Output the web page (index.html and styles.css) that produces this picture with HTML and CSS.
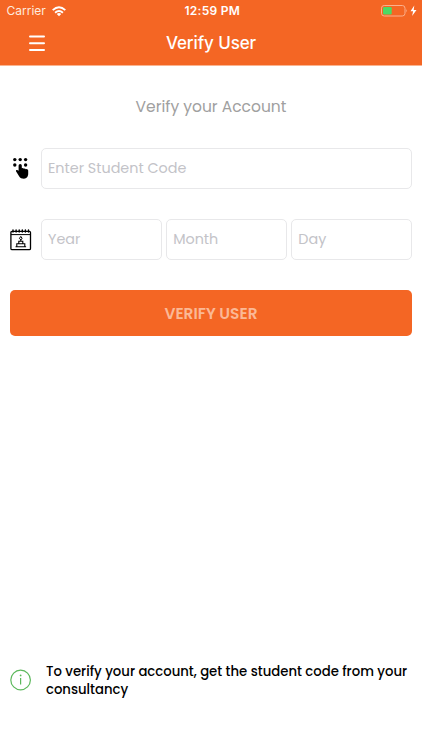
FILE: index.html
```
<!DOCTYPE html>
<html lang="en">
<head>
<meta charset="utf-8">
<title>Verify User</title>
<link rel="stylesheet" href="styles.css">
</head>
<body>
<header class="header">
  <div class="status">
    <div class="carrier"><span>Carrier</span>
      <svg width="14" height="11" viewBox="0 0 14 11" fill="none" stroke="#fff" stroke-width="1.9"><path d="M.7 4.1Q7-1.7 13.3 4.1M3.1 6.7Q7 3.2 10.9 6.7"/><path d="M4.8 8Q7 6.2 9.2 8L7 10.3Z" fill="#fff" stroke="none"/></svg>
    </div>
    <span class="time">12:59 PM</span>
    <svg class="battery" width="37" height="12" viewBox="0 0 37 12"><rect x=".5" y=".5" width="23.5" height="10.5" rx="2.7" fill="none" stroke="#fbb08d"/><rect x="2" y="2" width="8.7" height="7.5" rx="1.2" fill="#4cd964"/><path d="M25.3 4q1.6 1.7 0 3.5z" fill="#fbb08d"/><path d="M33.3.6 29.5 6.3h2.6l-1 4.6 4.4-6h-2.8z" fill="#fff"/></svg>
  </div>
  <div class="navbar">
    <svg class="menu" width="16" height="17" viewBox="0 0 16 17" stroke="#fff" stroke-width="2" stroke-linecap="round"><path d="M1 1.4h14M1 8.2h14M1 14.9h14"/></svg>
    <h1>Verify User</h1>
  </div>
</header>
<main class="form">
  <h2>Verify your Account</h2>
  <div class="row">
    <svg width="22" height="22" viewBox="0 0 22 22"><g><circle cx="4.8" cy="2.6" r="1.7"/><circle cx="10.2" cy="2.6" r="1.7"/><circle cx="15.6" cy="2.6" r="1.7"/><circle cx="4.8" cy="8" r="1.7"/><circle cx="15.6" cy="8" r="1.7"/></g><path d="M8.6 8.5a1.6 1.6 0 0 1 3.2 0v2.8q1.4-.6 2 .4 1.4-.5 1.9.5 2.3-.5 2.5 1.4v3.2c0 2.6-1.5 4.9-4.2 4.9-2.2 0-3.8-.6-4.9-2.4L6 14.3c-.3-1.6 1.3-1.9 2.6-.6z"/></svg>
    <input class="code" placeholder="Enter Student Code" aria-label="Student code">
  </div>
  <div class="row">
    <svg width="22" height="22" viewBox="0 0 22 22" fill="none" stroke="#000"><rect x=".9" y="2.4" width="19.6" height="18.2" rx="1.2" stroke-width="1.3"/><path d="M1 5.6h19.3" stroke-width="1"/><path d="M3 .9v2.2M6.1.9v2.2M9.2.9v2.2M12.3.9v2.2M15.4.9v2.2M18.5.9v2.2" stroke-width="1.4" stroke-linecap="round"/><path d="M6.8 17.4v-2.7h8v2.7M8.8 14.5v-2.3h4v2.3M10.8 12v-2M5.5 17.8h10.6" stroke-width="1.1"/><path d="M10.8 7.4q2.8 2.6 0 3.3-2.8-.7 0-3.3z" stroke-width="1"/></svg>
    <div class="dates">
      <input class="year" placeholder="Year" aria-label="Year">
      <input class="month" placeholder="Month" aria-label="Month">
      <input class="day" placeholder="Day" aria-label="Day">
    </div>
  </div>
  <button class="submit">VERIFY USER</button>
</main>
<footer class="note">
  <svg width="22" height="22" viewBox="0 0 22 22" fill="none" stroke="#5cb85c"><circle cx="10.6" cy="11" r="9.8" stroke-width="1.2"/><path d="M10.6 9v6.4" stroke-width="1.2"/><circle cx="10.6" cy="6.4" r=".9" fill="#5cb85c" stroke="none"/></svg>
  <p>To verify your account, get the student code from your<br>consultancy</p>
</footer>
</body>
</html>
```
FILE: styles.css
```
* { box-sizing: border-box; }
body {
  margin: 0;
  height: 750px;
  display: flex;
  flex-direction: column;
  background: #fff;
  font-family: Poppins, Inter, sans-serif;
  overflow: hidden;
}
svg { display: block; flex: none; }
.header { height: 66px; background: #f46624; color: #fff; border-bottom: 1px solid #fab490; }
.status {
  height: 22px;
  display: grid;
  grid-template-columns: 1fr auto 1fr;
  align-items: center;
  padding: 0 4px 0 6.5px;
  font: 12px/22px Inter, sans-serif;
}
.carrier { display: flex; align-items: center; gap: 6px; color: #ffeade; }
.time { font-weight: 600; letter-spacing: .25px; }
.battery { justify-self: end; }
.navbar {
  height: 42px;
  display: grid;
  grid-template-columns: 1fr auto 1fr;
  align-items: center;
  padding: 0 29px;
}
h1 { margin: 0; font: 500 17px/24px Inter, sans-serif; letter-spacing: -.1px; }
.form { padding: 29px 10px 0; }
h2 {
  margin: 0 0 28px;
  text-align: center;
  font-size: 15.5px;
  line-height: 24px;
  font-weight: 400;
  color: #a0a0a0;
}
.row { display: flex; align-items: center; gap: 9px; height: 42px; margin-bottom: 29.5px; }
input {
  width: 100%;
  min-width: 0;
  height: 41px;
  padding: 0 6px;
  border: 1px solid #e8e8ea;
  border-radius: 5px;
  font: 14.35px Poppins, Inter, sans-serif;
}
input::placeholder { color: #c3c3c8; opacity: 1; }
.dates { flex: 1; display: grid; grid-template-columns: repeat(3, 1fr); gap: 4.5px; }
.submit {
  display: block;
  width: 100%;
  height: 46px;
  border: 0;
  border-radius: 5px;
  background: #f46624;
  color: #fbb895;
  font: 600 15.4px Poppins, Inter, sans-serif;
}
.note { margin: auto 10px 51px; display: flex; align-items: center; gap: 14px; }
.note svg { margin-bottom: 2px; }
.note p { margin: 0; padding-top: 1px; font-size: 13.22px; line-height: 18px; font-weight: 500; color: #000; white-space: nowrap; }
```
